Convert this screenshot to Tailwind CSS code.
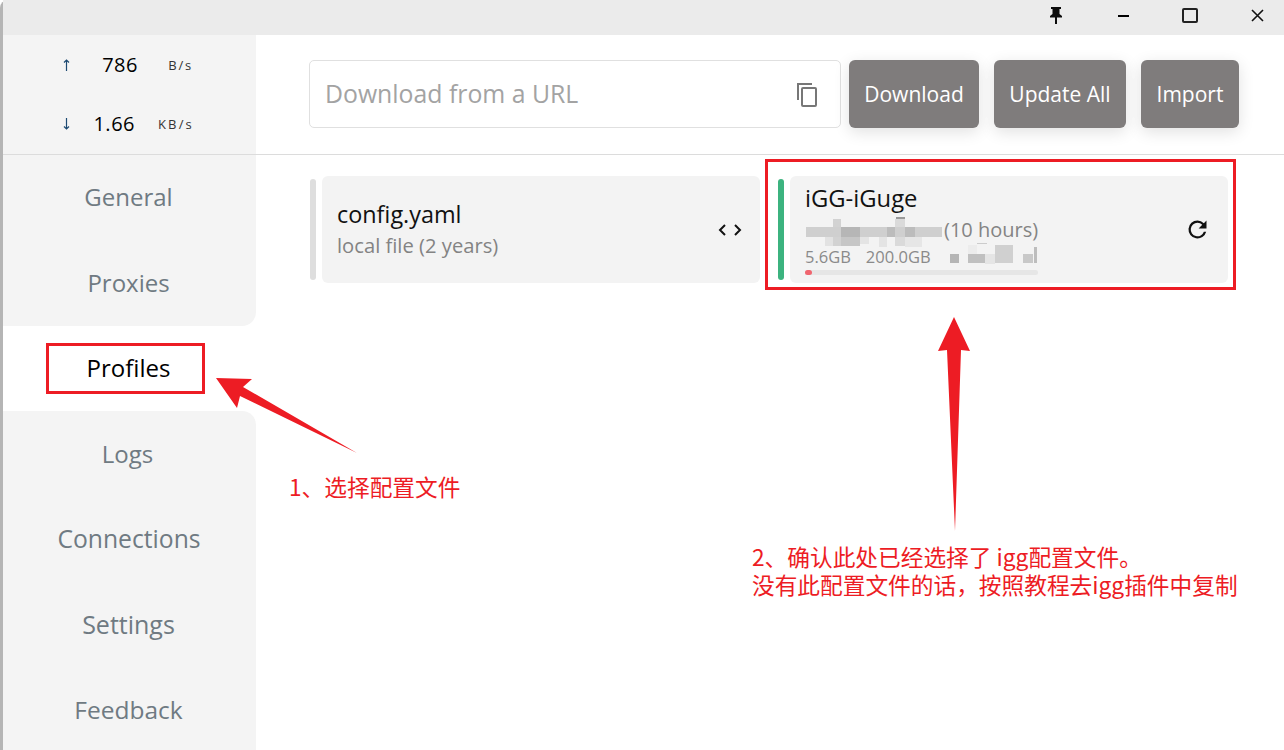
<!DOCTYPE html>
<html lang="zh-CN">
<head>
<meta charset="UTF-8">
<title>Clash Profiles</title>
<script src="https://cdn.jsdelivr.net/npm/@tailwindcss/browser@4"></script>
</head>
<body class="bg-white font-['Open_Sans','Noto_Sans_CJK_SC',sans-serif] overflow-hidden">
<div class="relative w-[1284px] h-[750px] overflow-hidden">
  <div class="flex flex-col h-full border-l-[3px] border-[#b5b5b5] rounded-tl-lg">
    <!-- title bar -->
    <div class="h-[35px] bg-[#ebebeb] flex justify-end items-center shrink-0 pb-[4px] pr-[17px] gap-[47px]">
      <div class="w-[20px] flex justify-center">
        <svg width="12" height="17" viewBox="0 0 12 17"><path d="M1 0h10v2h-1.500v5l2.500 2v1.500h-5v6.500h-2v-6.500h-5v-1.500l2.500-2v-5h-1.500z" fill="#0c0c0c"/></svg>
      </div>
      <div class="w-[20px] flex justify-center">
        <div class="w-[11px] h-[2px] bg-black"></div>
      </div>
      <div class="w-[20px] flex justify-center">
        <div class="w-[16px] h-[15px] border-2 border-[#222] rounded-[2px]"></div>
      </div>
      <div class="w-[20px] flex justify-center">
        <svg width="13" height="13" viewBox="0 0 13 13"><path d="M1 1l11 11M12 1l-11 11" stroke="#111" stroke-width="1.600"/></svg>
      </div>
    </div>
    <div class="flex flex-1 min-h-0">
      <!-- sidebar -->
      <div class="w-[253px] shrink-0 flex flex-col">
        <div class="h-[120px] bg-[#f4f4f4] border-b border-[#dcdcdc] text-black flex flex-col">
          <div class="h-[59px] flex items-center pt-[1px]">
            <svg class="ml-[60px]" width="7" height="12" viewBox="0 0 7 12" fill="none" stroke="#1d4a72" stroke-width="1.200"><path d="M3.500 12V1M1 3.500L3.500 1L6 3.500"/></svg>
            <span class="w-[68px] text-right text-[20px] tracking-[0.5px]">786</span>
            <span class="w-[55px] text-right text-[13px] tracking-[1.8px] text-[#333] pt-[2px]">B/s</span>
          </div>
          <div class="h-[59px] flex items-center pt-[1px]">
            <svg class="ml-[60px]" width="7" height="12" viewBox="0 0 7 12" fill="none" stroke="#1d4a72" stroke-width="1.200"><path d="M3.500 0V11M1 8.500L3.500 11L6 8.500"/></svg>
            <span class="w-[65px] text-right text-[20px] tracking-[0.5px]">1.66</span>
            <span class="w-[59px] text-right text-[13px] tracking-[2.2px] text-[#333] pt-[2px]">KB/s</span>
          </div>
        </div>
        <div class="flex-1 flex flex-col text-[24px] text-[#6f7a82]">
          <div class="h-[85px] bg-[#f4f4f4] flex items-center justify-center pr-[2px] pb-[2px]">General</div>
          <div class="h-[86px] bg-[#f4f4f4] flex items-center justify-center pr-[2px] rounded-br-[14px]">Proxies</div>
          <div class="h-[85px] bg-white flex items-center justify-center pr-[2px] pb-[2px] text-black">Profiles</div>
          <div class="h-[86px] bg-[#f4f4f4] flex items-center justify-center pr-[4px] rounded-tr-[14px]">Logs</div>
          <div class="h-[85px] bg-[#f4f4f4] flex items-center justify-center pr-[1px] pb-[2px] text-[24.700px]">Connections</div>
          <div class="h-[86px] bg-[#f4f4f4] flex items-center justify-center pr-[2px] text-[25px]">Settings</div>
          <div class="flex-1 bg-[#f4f4f4] flex items-center justify-center pr-[2px] pt-[2px] text-[24.500px]">Feedback</div>
        </div>
      </div>
      <!-- main -->
      <div class="flex-1 min-w-0 flex flex-col">
        <div class="h-[120px] border-b border-[#dcdcdc] pt-[25px] pl-[53px] flex items-start">
          <div class="w-[532px] h-[68px] border border-[#e0e0e0] rounded-[5px] flex items-center justify-between pl-[15px] pr-[22px]">
            <span class="text-[24.800px] text-[#a3a3a3]">Download from a URL</span>
            <svg width="22" height="25" viewBox="0 0 22 25" fill="none" stroke="#777" stroke-width="2"><path d="M16 2H2v16"/><rect x="6" y="6" width="14" height="18" rx="1"/></svg>
          </div>
          <button class="ml-[8px] w-[130px] h-[68px] pt-[2px] bg-[#7f7c7c] rounded-[6px] text-white text-[21px] shadow-[0_4px_16px_rgba(0,0,0,0.12)]">Download</button>
          <button class="ml-[15px] w-[132px] h-[68px] pt-[2px] bg-[#7f7c7c] rounded-[6px] text-white text-[21px] shadow-[0_4px_16px_rgba(0,0,0,0.12)]">Update All</button>
          <button class="ml-[15px] w-[98px] h-[68px] pt-[2px] bg-[#7f7c7c] rounded-[6px] text-white text-[21px] shadow-[0_4px_16px_rgba(0,0,0,0.12)]">Import</button>
        </div>
        <div class="pt-[21px] pl-[54px] flex">
          <div class="flex items-center w-[468px] h-[107px]">
            <div class="w-[6px] h-[101px] bg-[#dedede] rounded-[3px]"></div>
            <div class="ml-[6px] w-[438px] h-[107px] bg-[#f3f3f3] rounded-[6px] flex items-center justify-between pl-[15px] pr-[18px]">
              <div>
                <div class="text-[23.400px] leading-[30px] text-[#111] pb-[1px]">config.yaml</div>
                <div class="text-[20.200px] leading-[30px] text-[#838383]">local file (2 years)</div>
              </div>
              <svg width="24" height="14" viewBox="0 0 24 14" fill="none" stroke="#111" stroke-width="2"><path d="M7 2l-5 5 5 5M17 2l5 5-5 5"/></svg>
            </div>
          </div>
          <div class="flex items-center w-[450px] h-[107px]">
            <div class="w-[6px] h-[101px] bg-[#3cb37f] rounded-[3px]"></div>
            <div class="ml-[6px] w-[438px] h-[107px] bg-[#f3f3f3] rounded-[6px] flex items-center justify-between pl-[15px] pr-[17px]">
              <div class="w-[233px]">
                <div class="h-[30px] text-[23.800px] leading-[26px] text-[#111]">iGG-iGuge</div>
                <div class="flex items-center h-[28px] mt-[1px]">
                  <!-- pixelated, hidden subscription name -->
                  <svg class="overflow-visible" width="139" height="28" viewBox="0 0 139 28">
                    <rect x="20" y="21" width="8" height="9" fill="#e2e2e2"/>
                    <rect x="28" y="3" width="8" height="27" fill="#d2d2d2"/>
                    <rect x="36" y="12" width="19" height="18" fill="#c6c6c6"/>
                    <rect x="55" y="21" width="9" height="7" fill="#e4e4e4"/>
                    <rect x="74" y="21" width="8" height="10" fill="#e4e4e4"/>
                    <rect x="90" y="3" width="10" height="27" fill="#dadada"/>
                    <rect x="91" y="1" width="9" height="2" fill="#999999"/>
                    <rect x="100" y="21" width="17" height="10" fill="#e6e6e6"/>
                    <rect x="1" y="11" width="136" height="10" fill="#cfcfcf"/>
                    <rect x="36" y="11" width="19" height="10" fill="#b6b6b6"/>
                    <rect x="82" y="11" width="8" height="10" fill="#bcbcbc"/>
                    <rect x="100" y="11" width="10" height="10" fill="#bcbcbc"/>
                  </svg>
                  <span class="text-[20px] text-[#848484] whitespace-nowrap">(10 hours)</span>
                </div>
                <div class="flex items-center h-[24px] mt-[2px] text-[16.500px] text-[#8a8a8a]">
                  <span>5.6GB</span>
                  <span class="ml-[15px]">200.0GB</span>
                  <svg class="ml-[19px] overflow-visible" width="88" height="24" viewBox="0 0 88 24">
                    <rect x="0" y="8" width="9" height="9" fill="#b5b5b5"/>
                    <rect x="18" y="-1" width="9" height="9" fill="#ececec"/>
                    <rect x="27" y="-3" width="10" height="1" fill="#cccccc"/>
                    <rect x="18" y="8" width="17" height="9" fill="#c0c0c0"/>
                    <rect x="35" y="8" width="10" height="10" fill="#e5e5e5"/>
                    <rect x="45" y="-1" width="18" height="18" fill="#d0d0d0"/>
                    <rect x="73" y="8" width="10" height="9" fill="#c8c8c8"/>
                    <rect x="84" y="1" width="3" height="16" fill="#bdbdbd"/>
                  </svg>
                </div>
                <div class="h-[5px] bg-[#e6e6e6] rounded-full">
                  <div class="w-[7px] h-[5px] bg-[#f0656f] rounded-full"></div>
                </div>
              </div>
              <svg width="27" height="27" viewBox="0 0 24 24" fill="#111"><path d="M17.650 6.350A7.958 7.958 0 0 0 12 4a8 8 0 1 0 7.730 10h-2.080A6 6 0 1 1 12 6c1.660 0 3.140.69 4.220 1.780L13 11h7V4z"/></svg>
            </div>
          </div>
        </div>
      </div>
    </div>
  </div>

  <!-- annotations over the screenshot -->
  <div class="absolute left-[765px] top-[159px] w-[471px] h-[131px] border-[3px] border-[#ed1c24]"></div>
  <div class="absolute left-[46px] top-[343px] w-[159px] h-[51px] border-[3px] border-[#ed1c24]"></div>
  <svg class="absolute left-0 top-0" width="1284" height="750" viewBox="0 0 1284 750" fill="#ed1c24">
    <path d="M216 378L252 379L243 387L357 453L240 396L237 408z"/>
    <path d="M954 317L970 351L961 350L955 531L947 350L938 351z"/>
  </svg>
  <div class="absolute left-[289px] top-[473px] text-[22.700px] leading-[28px] text-[#ed1c24] whitespace-nowrap font-['Noto_Sans_CJK_SC','Liberation_Sans',sans-serif]">1、选择配置文件</div>
  <div class="absolute left-[752px] top-[542px] text-[22.700px] leading-[29px] text-[#ed1c24] whitespace-nowrap font-['Noto_Sans_CJK_SC','Liberation_Sans',sans-serif]">
    <div>2、确认此处已经选择了 igg配置文件。</div>
    <div class="-mt-[1px]">没有此配置文件的话，按照教程去igg插件中复制</div>
  </div>
</div>
</body>
</html>
